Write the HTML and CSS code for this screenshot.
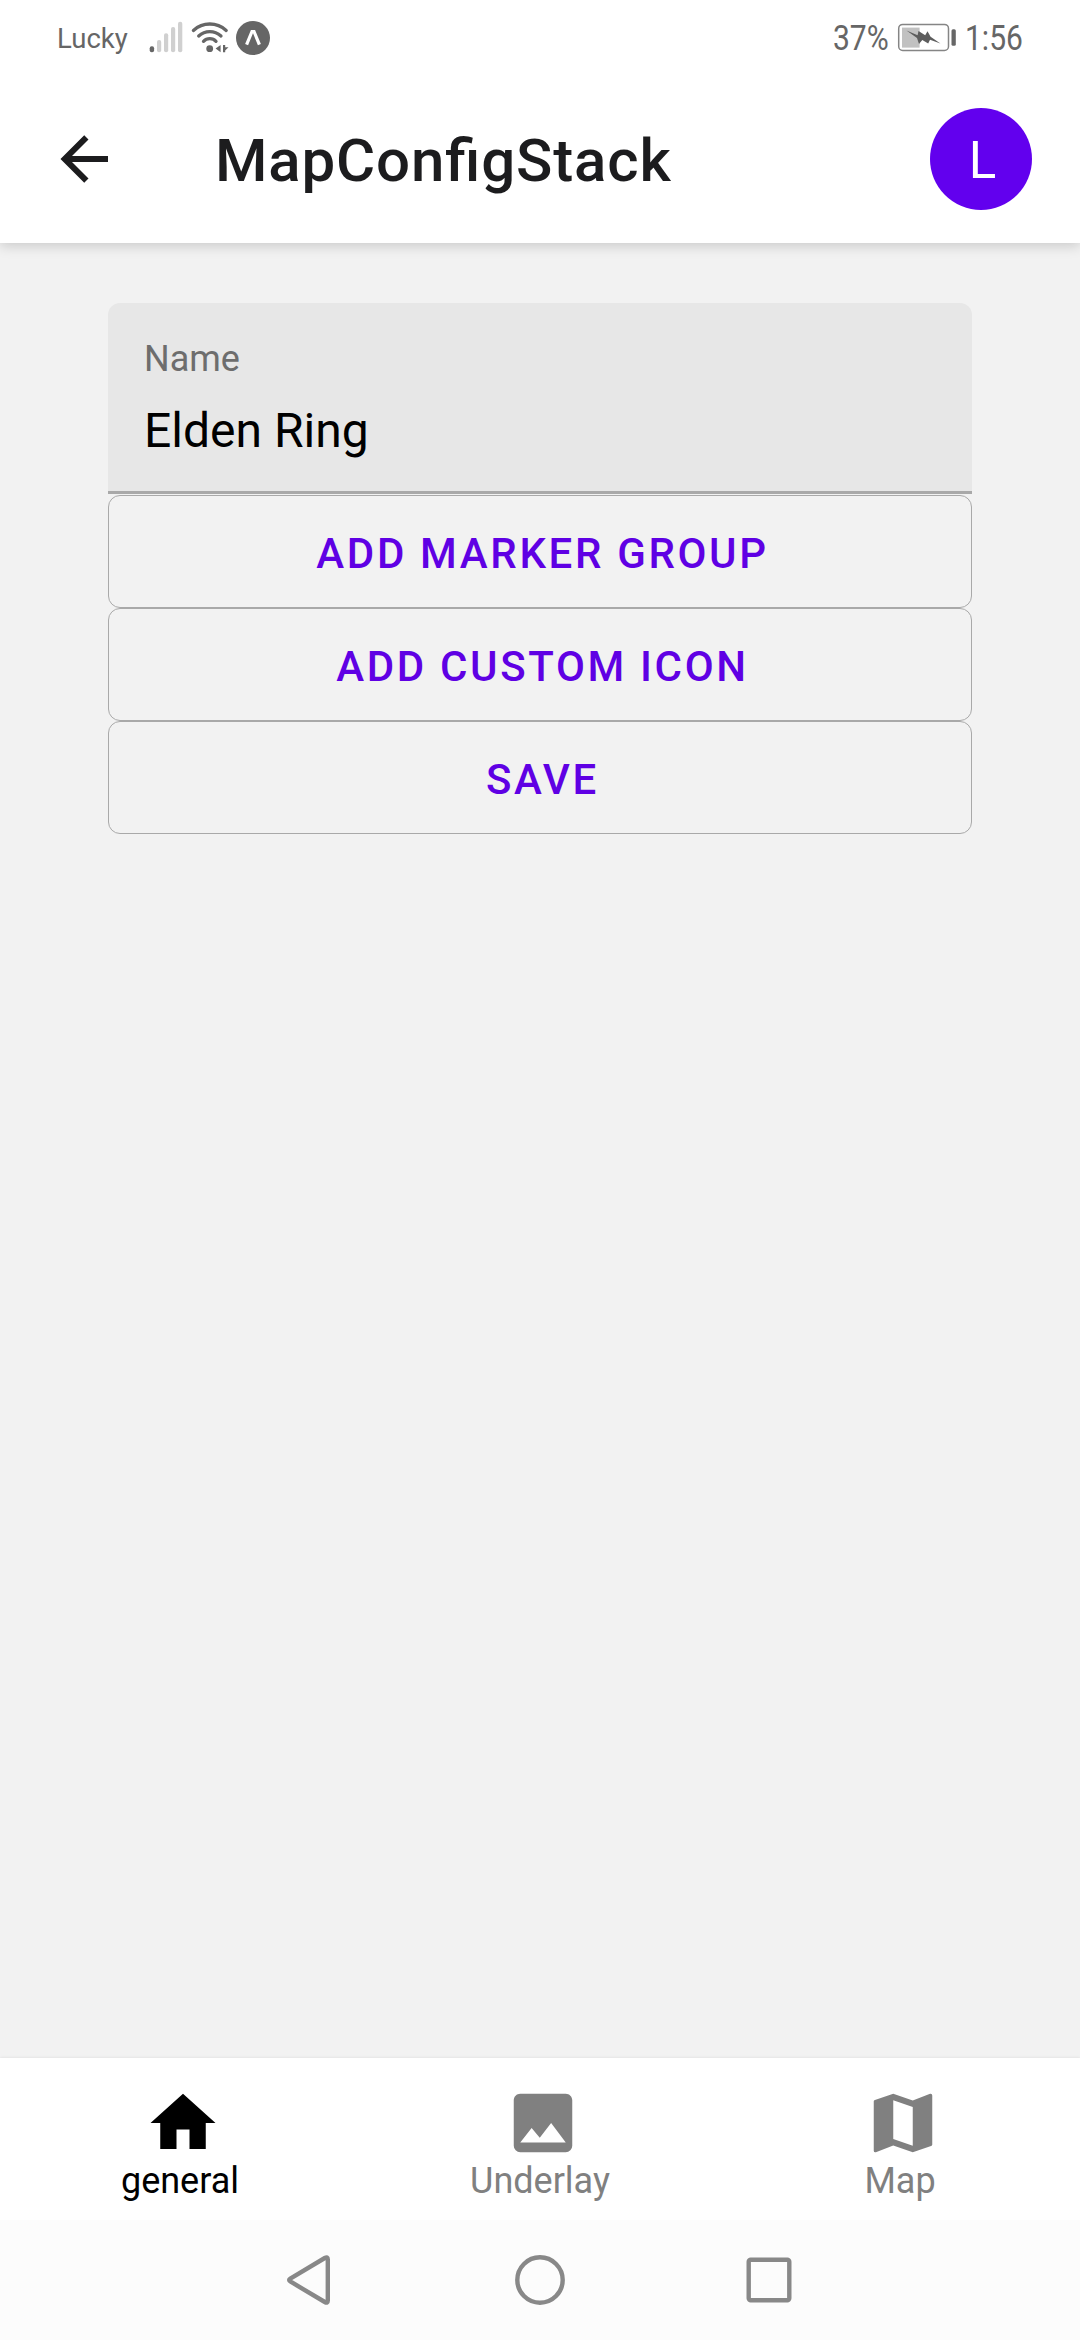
FILE: index.html
```html
<!DOCTYPE html>
<html lang="en">
<head>
<meta charset="utf-8">
<title>MapConfigStack</title>
<link rel="stylesheet" href="styles.css">
</head>
<body>
<div class="screen">
  <div class="status">
    <span class="carrier">Lucky</span>
    <svg class="signals" width="125" height="40" viewBox="148 18 125 40">
      <rect x="149.7" y="46.3" width="4.4" height="6" rx="2" fill="#666"/>
      <g fill="#d0d0d0">
        <rect x="157" y="40" width="4.2" height="12.3" rx="2"/>
        <rect x="164" y="33.3" width="4.2" height="19" rx="2"/>
        <rect x="171" y="27" width="4.2" height="25.3" rx="2"/>
        <rect x="178" y="21.7" width="4.3" height="30.6" rx="2"/>
      </g>
      <g fill="none" stroke="#666" stroke-width="3.3" stroke-linecap="round">
        <path d="M193.4 30.4Q200.5 24 209.8 24T226.2 30.4"/>
        <path d="M198.7 36Q203.5 31.7 209.8 31.7T221 36"/>
        <path d="M203.5 41.3Q206 38.7 209.8 38.7T216 41.3"/>
      </g>
      <circle cx="209.7" cy="48.7" r="3.4" fill="#666"/>
      <path d="M215.6 48.5L220.6 45V52.3ZM223 45V52.3H225.2V50.5L228.5 47.3H225.2V45Z" fill="#666"/>
      <circle cx="253" cy="38" r="17" fill="#666"/>
      <path d="M246.6 44.6L252 31.5H254L259.4 44.6" fill="none" stroke="#fff" stroke-width="3.2"/>
    </svg>
    <span class="percent"><span>37%</span></span>
    <svg class="battery" width="60" height="32" viewBox="897 22 60 32">
      <rect x="898.7" y="24.4" width="49.8" height="26" rx="4" fill="#fff" stroke="#858585" stroke-width="1.5"/>
      <rect x="902" y="27.6" width="17.6" height="20" fill="#c1c1c1"/>
      <path d="M906.5 30.6L917.6 35.3L918.5 31L925.2 35.3L927.5 31.3L930.6 36.7L940.4 43.4L930 39.8L928.2 43.6L922.3 40L919 44L917 38Z" fill="#5d5d5d"/>
      <rect x="951.5" y="29.3" width="4.3" height="16.5" rx="1.5" fill="#666"/>
    </svg>
    <span class="clock"><span>1:56</span></span>
  </div>

  <header class="appbar">
    <svg class="back" width="72" height="72" viewBox="0 0 24 24"><path fill="#1c1c1e" d="M20 11v2H8l5.500 5.500-1.420 1.420L4.160 12l7.920-7.920L13.500 5.500 8 11h12Z"/></svg>
    <h1 class="title">MapConfigStack</h1>
    <div class="avatar">L</div>
  </header>

  <main class="content">
    <label class="field">
      <span class="field-label">Name</span>
      <span class="field-value">Elden Ring</span>
    </label>
    <button class="outlined">ADD MARKER GROUP</button>
    <button class="outlined">ADD CUSTOM ICON</button>
    <button class="outlined">SAVE</button>
  </main>

  <nav class="tabs">
    <div class="tab active">
      <svg class="tab-icon" viewBox="0 0 24 24"><path d="M10 20v-6h4v6h5v-8h3L12 3 2 12h3v8h5Z"/></svg>
      <span>general</span>
    </div>
    <div class="tab">
      <svg class="tab-icon" viewBox="0 0 24 24"><path d="M8.500 13.500l2.500 3 3.500-4.500 4.500 6H5m16 1V5c0-1.110-.9-2-2-2H5c-1.100 0-2 .9-2 2v14a2 2 0 0 0 2 2h14a2 2 0 0 0 2-2Z"/></svg>
      <span>Underlay</span>
    </div>
    <div class="tab">
      <svg class="tab-icon" viewBox="0 0 24 24"><path d="M15 19l-6-2.110V5l6 2.110M20.500 3c-.06 0-.11 0-.16.030L15 5.100 9 3 3.360 4.900c-.21.070-.36.250-.36.480V20.500a.5.5 0 0 0 .5.5c.05 0 .11 0 .16-.03L9 18.900 15 21l5.640-1.900c.21-.1.360-.25.360-.48V3.500a.5.5 0 0 0-.5-.5Z"/></svg>
      <span>Map</span>
    </div>
  </nav>

  <div class="system">
    <svg width="60" height="60" viewBox="0 0 60 60"><path d="M46.800 9.500V50.500Q46.800 53.800 43.800 52L9.300 31.500Q7 30 9.300 28.500L43.800 8Q46.800 6.200 46.800 9.500Z"/></svg>
    <svg width="60" height="60" viewBox="0 0 60 60"><circle cx="30" cy="30" r="22.700"/></svg>
    <svg width="60" height="60" viewBox="0 0 60 60"><rect x="9.700" y="9.700" width="40.600" height="40.600" rx="2"/></svg>
  </div>
</div>
</body>
</html>
```
FILE: styles.css
```css
* { box-sizing: border-box; }

body {
  margin: 0;
  font-family: Roboto, "Noto Sans", sans-serif;
  background: #f2f2f2;
}

.screen {
  display: flex;
  flex-direction: column;
  width: 1080px;
  height: 2340px;
  overflow: hidden;
}

.status {
  display: flex;
  align-items: flex-start;
  flex: none;
  height: 75px;
  padding-left: 57px;
  background: #fff;
  color: #666;
  white-space: nowrap;
}

.carrier {
  width: 91px;
  font-size: 27.5px;
  line-height: 77px;
}

.signals { flex: none; margin-top: 18px; }

.percent,
.clock {
  font-size: 34.5px;
  line-height: 77px;
}

.percent { width: 64px; margin-left: 560px; }
.clock { width: 70px; margin-left: 8px; }

.percent span,
.clock span {
  display: inline-block;
  transform: scaleX(0.87);
  transform-origin: left;
}

.battery { flex: none; margin-top: 22px; }

.appbar {
  display: flex;
  align-items: center;
  flex: none;
  height: 168px;
  padding: 0 48px;
  background: #fff;
  box-shadow: 0 3px 12px rgba(0, 0, 0, 0.17);
  clip-path: inset(0 0 -40px 0);
  z-index: 1;
}

.title {
  flex: 1;
  margin: 4px 0 0 95px;
  color: #1c1c1e;
  font-size: 60px;
  font-weight: 500;
  line-height: 72px;
  letter-spacing: 0.85px;
  font-feature-settings: "liga" 1;
}

.avatar {
  width: 102px;
  height: 102px;
  padding-left: 3px;
  border-radius: 50%;
  background: #6200ee;
  color: #fff;
  font-size: 51px;
  line-height: 106px;
  text-align: center;
}

.content {
  display: flex;
  flex-direction: column;
  flex: 1;
  padding: 60px 108px 0;
}

.field {
  display: flex;
  flex-direction: column;
  height: 191px;
  margin-bottom: 1px;
  padding: 32px 36px 0;
  border-bottom: 3px solid #a9a9a9;
  border-radius: 12px 12px 0 0;
  background: #e7e7e7;
}

.field-label {
  color: #6d6d6d;
  font-size: 36px;
  line-height: 48px;
}

.field-value {
  margin-top: 16px;
  color: #000;
  font-size: 48px;
  line-height: 64px;
}

.outlined {
  height: 113px;
  padding: 5px 0 0 5px;
  border: 1px solid #a9a9a9;
  border-radius: 12px;
  background: transparent;
  color: #5f00e4;
  font: 500 42px/60px Roboto, "Noto Sans", sans-serif;
  letter-spacing: 2.65px;
}

.tabs {
  display: flex;
  flex: none;
  height: 162px;
  background: #fff;
  box-shadow: 0 0 3px rgba(0, 0, 0, 0.1);
}

.tab {
  display: flex;
  flex: 1;
  flex-direction: column;
  align-items: center;
  padding-top: 26px;
  color: #808080;
  font-size: 36px;
  line-height: 39px;
}

.tab.active { color: #000; }

.tab-icon {
  width: 78px;
  height: 78px;
  margin-left: 6px;
  fill: currentColor;
}

.system {
  display: flex;
  align-items: center;
  justify-content: center;
  flex: none;
  gap: 169px;
  height: 120px;
  background: #fcfcfc;
}

.system svg {
  fill: none;
  stroke: #888;
  stroke-width: 4.400px;
}
```
